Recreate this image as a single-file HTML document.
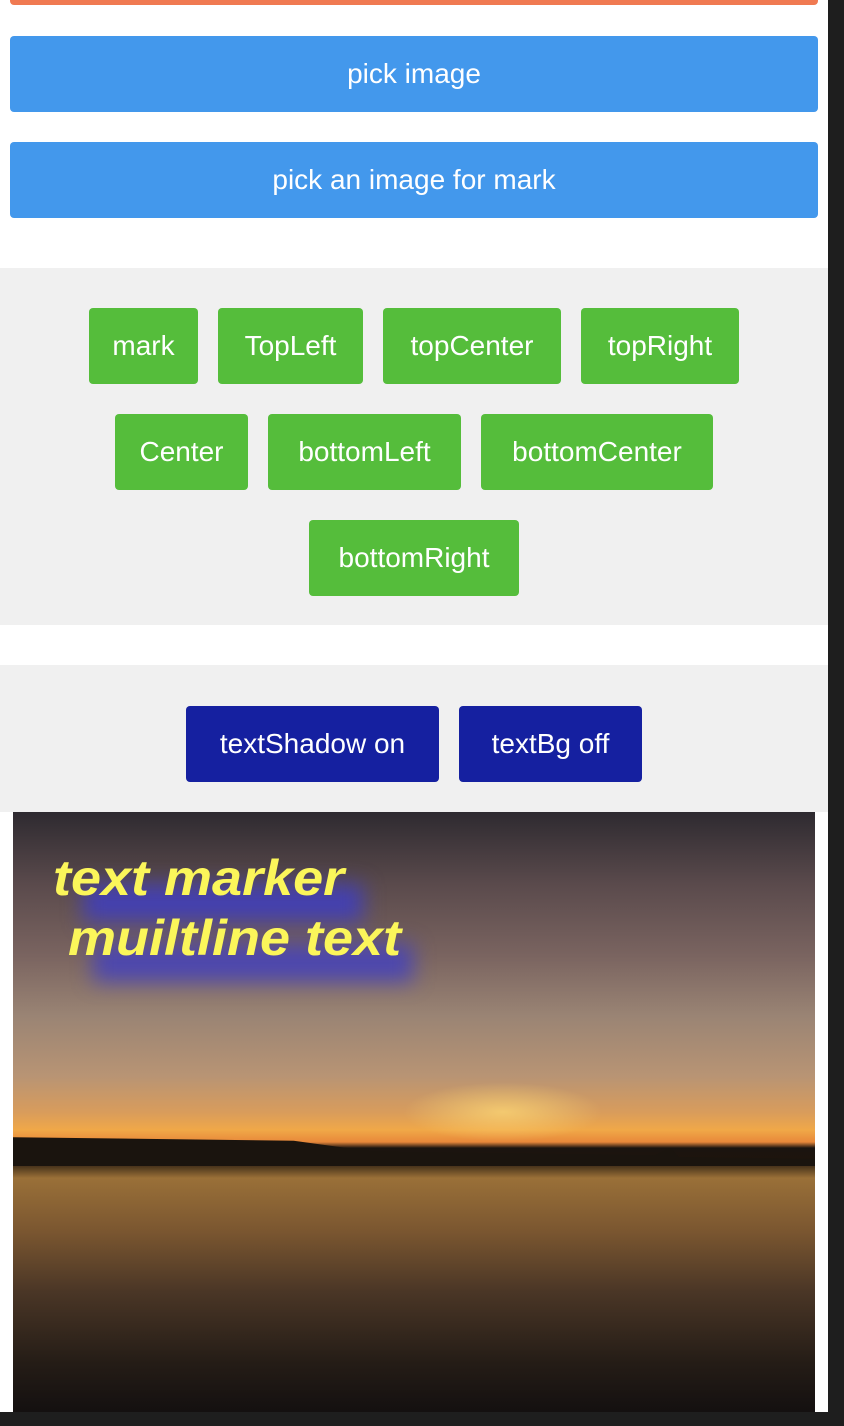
<!DOCTYPE html>
<html><head><meta charset="utf-8"><style>
*{margin:0;padding:0;box-sizing:border-box}
body{width:844px;height:1426px;background:#fff;position:relative;overflow:hidden;font-family:"Liberation Sans",sans-serif}
.a{position:absolute}
.btn{position:absolute;color:#fff;font-size:28px;display:flex;align-items:center;justify-content:center;border-radius:4px}
.b{background:#4398ec;left:10px;width:808px;height:76px}
.g{background:#55bd3b;height:76px}
.d{background:#1520a0;height:76px}
</style></head><body>
<div class="a" style="left:10px;top:0;width:808px;height:5px;background:#f07a52;border-radius:0 0 4px 4px"></div>
<div class="btn b" style="top:36px">pick image</div>
<div class="btn b" style="top:142px">pick an image for mark</div>
<div class="a" style="left:0;top:268px;width:828px;height:357px;background:#f0f0f0"></div>
<div class="btn g" style="left:89px;top:308px;width:109px">mark</div>
<div class="btn g" style="left:218px;top:308px;width:145px">TopLeft</div>
<div class="btn g" style="left:383px;top:308px;width:178px">topCenter</div>
<div class="btn g" style="left:581px;top:308px;width:158px">topRight</div>
<div class="btn g" style="left:115px;top:414px;width:133px">Center</div>
<div class="btn g" style="left:268px;top:414px;width:193px">bottomLeft</div>
<div class="btn g" style="left:481px;top:414px;width:232px">bottomCenter</div>
<div class="btn g" style="left:309px;top:520px;width:210px">bottomRight</div>
<div class="a" style="left:0;top:665px;width:828px;height:147px;background:#f0f0f0"></div>
<div class="btn d" style="left:186px;top:706px;width:253px">textShadow on</div>
<div class="btn d" style="left:459px;top:706px;width:183px">textBg off</div>
<div class="a" style="left:13px;top:812px;width:802px;height:600px;overflow:hidden;background:linear-gradient(180deg,#2e2a30 0%,#5a4a4c 12%,#7a6460 24%,#9a8474 34%,#b89474 44%,#d89c5c 50%,#f0a848 53%,#e8883a 55%,#1a1410 56%,#1e140c 58%,#9a7038 61%,#7a5630 70%,#4a3626 80%,#241c16 92%,#141010 100%)">
<div class="a" style="left:0;top:318px;width:802px;height:36px;background:#1a140e;clip-path:polygon(0 20%,35% 30%,45% 60%,80% 70%,82% 50%,83% 75%,100% 80%,100% 100%,0 100%)"></div>
<div class="a" style="left:390px;top:270px;width:200px;height:60px;background:radial-gradient(ellipse,rgba(255,220,120,.7),transparent 70%)"></div>
<div class="a" style="left:70px;top:72px;width:280px;height:38px;background:rgba(60,60,200,.8);filter:blur(10px)"></div>
<div class="a" style="left:80px;top:132px;width:320px;height:38px;background:rgba(60,60,200,.75);filter:blur(10px)"></div>
<div class="a" style="left:40px;top:36px;color:#fbf65a;font-size:50px;font-weight:bold;font-style:italic;line-height:60px;white-space:pre;transform:scaleX(1.08);transform-origin:0 0">text marker
 muiltline text</div>
</div>
<div class="a" style="left:828px;top:0;width:16px;height:1426px;background:#1e1e1e"></div>
<div class="a" style="left:0;top:1412px;width:844px;height:14px;background:#1e1e1e"></div>
</body></html>
